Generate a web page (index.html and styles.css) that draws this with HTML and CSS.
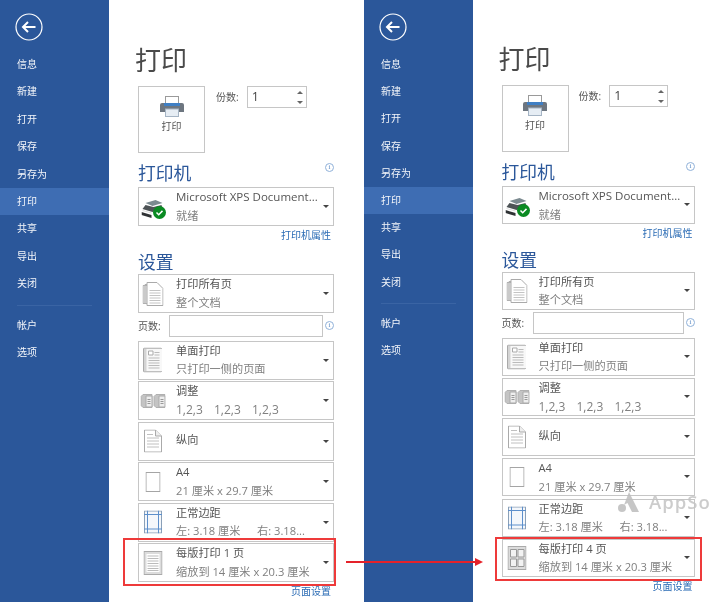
FILE: index.html
```html
<!DOCTYPE html>
<html lang="zh-CN">
<head>
    <meta charset="UTF-8">
    <title>打印</title>
    <link rel="stylesheet" href="styles.css">
</head>
<body>
    <!-- shared icons -->
    <svg class="defs" width="0" height="0">
        <symbol id="i-back" viewBox="0 0 28 28"><circle cx="14" cy="14" r="13" fill="none" stroke="#fff" stroke-width="1.2"/><path d="M20.5 14H8.500M13 9l-5 5 5 5" fill="none" stroke="#fff" stroke-width="2"/></symbol>
        <symbol id="i-printer" viewBox="0 0 24 21"><rect x="5.500" y="0.500" width="13" height="7" fill="#fff" stroke="#9a9a9a"/><path d="M2 7h20a2 2 0 0 1 2 2v7h-5v-3H5v3H0V9a2 2 0 0 1 2-2z" fill="#6d7680"/><rect x="4" y="7" width="16" height="3" fill="#3f7fc4"/><rect x="5.500" y="13" width="13" height="7.500" fill="#e6edf4" stroke="#a5b4c4"/></symbol>
        <symbol id="i-xps" viewBox="0 0 25 20"><path d="M4 3l10-3 7 3-10 3z" fill="#7b8a90"/><path d="M1 9l3-4 8 2 8-2 1 4-10 3z" fill="#4d5356"/><path d="M0 12l10 3v3L0 15z" fill="#2f3234"/><path d="M1 10.500l9 2.500" stroke="#ddd"/><circle cx="18" cy="12.500" r="6.500" fill="#0a8a22"/><path d="M15 12.500l2.200 2.200 3.800-3.800" fill="none" stroke="#fff" stroke-width="1.500"/></symbol>
        <symbol id="i-all" viewBox="0 0 21 25"><path d="M0.500 4h8v18h-8zM2.500 3h8v19h-8z" fill="#e4e4e4" stroke="#b0b0b0"/><path d="M4.500 1h10l6 6v17h-16z" fill="#fff" stroke="#aaa"/><path d="M7 9h11M7 11.500h11M7 14h11M7 16.500h11M7 19h11M7 21.500h11" stroke="#c4c4c4"/></symbol>
        <symbol id="i-single" viewBox="0 0 20 25"><rect x="0.500" y="0.500" width="18" height="24" rx="1" fill="#d4d4d4" stroke="#aaa"/><rect x="3.500" y="1.500" width="15.500" height="22" fill="#f8f8f8"/><path d="M5.500 3.500h4.500v4H5.500z" fill="#fff" stroke="#aaa"/><path d="M11.500 5h5M11.500 7.500h5M5.500 10.500h11M5.500 13h11M5.500 15.500h11M5.500 18h11M5.500 20.500h11" stroke="#bbb"/></symbol>
        <symbol id="i-collate" viewBox="0 0 25 15"><path d="M0.500 3l2-2h9v13h-9l-2-2z" fill="#c4c4c4" stroke="#b0b0b0"/><path d="M5.500 2.500h6v11h-6z" fill="#eee" stroke="#aaa"/><path d="M7 6h3M7 8h3M7 10h3" stroke="#999"/><path d="M13.500 3l2-2h9v13h-9l-2-2z" fill="#c4c4c4" stroke="#b0b0b0"/><path d="M18.500 2.500h6v11h-6z" fill="#eee" stroke="#aaa"/><path d="M20 6h3M20 8h3M20 10h3" stroke="#999"/></symbol>
        <symbol id="i-portrait" viewBox="0 0 18 23"><path d="M0.500 0.500h11l6 6v16h-17z" fill="#fff" stroke="#aaa"/><path d="M11.500 0.500v6h6" fill="#eee" stroke="#aaa"/><path d="M3 5h6M3 8.500h12M3 11.500h12M3 14.500h12M3 17.500h12" stroke="#c0c0c0"/></symbol>
        <symbol id="i-a4" viewBox="0 0 15 20"><rect x="0.500" y="0.500" width="14" height="19" fill="#fff" stroke="#a5a5a5"/></symbol>
        <symbol id="i-margins" viewBox="0 0 18 23"><rect x="0.500" y="0.500" width="17" height="22" fill="#f4f7fb" stroke="#8aa0b8"/><path d="M0 4h18M0 18.500h18M3.500 0v23M14.500 0v23" stroke="#5d8fcb"/></symbol>
        <symbol id="i-one" viewBox="0 0 19 24"><rect x="0.500" y="0.500" width="18" height="23" fill="#dcdcdc" stroke="#aaa"/><rect x="3" y="3" width="13" height="18" fill="#fff"/><path d="M4 5h11M4 7.500h11M4 10h11M4 12.500h11M4 15h11M4 17.500h11M4 19.500h11" stroke="#bbb"/></symbol>
        <symbol id="i-four" viewBox="0 0 19 24"><rect x="0.500" y="0.500" width="18" height="23" fill="#dcdcdc" stroke="#aaa"/><path d="M3 3.500h6v7.500H3zM10.500 3.500h6v7.500h-6zM3 13h6v7.500H3zM10.500 13h6v7.500h-6z" fill="#f2f2f2" stroke="#999"/></symbol>
    </svg>

    <div class="compare">
        <section class="window">
            <nav class="side">
                <svg class="back" width="28" height="28"><use href="#i-back"/></svg>
                <ul class="menu">
                    <li>信息</li><li>新建</li><li>打开</li><li>保存</li><li>另存为</li>
                    <li class="active">打印</li>
                    <li>共享</li><li>导出</li><li>关闭</li>
                    <li class="divider"></li>
                    <li>帐户</li><li>选项</li>
                </ul>
            </nav>
            <main class="backstage">
                <h1>打印</h1>
                <div class="print-row">
                    <button class="print-btn">
                        <svg width="24" height="21"><use href="#i-printer"/></svg>
                        <span>打印</span>
                    </button>
                    <label class="copies-label">份数:</label>
                    <div class="copies">1<span class="spin"><i class="up"></i><i class="down"></i></span></div>
                </div>
                <div class="head-row"><h2>打印机</h2><span class="info">i</span></div>
                <div class="drop">
                    <svg class="ico ico-xps" width="25" height="20"><use href="#i-xps"/></svg>
                    <div class="txt"><b class="printer-name">Microsoft XPS Document...</b><span>就绪</span></div>
                    <i class="caret"></i>
                </div>
                <a class="link printer-link">打印机属性</a>
                <h2 class="settings">设置</h2>
                <div class="drop">
                    <svg class="ico" width="21" height="25"><use href="#i-all"/></svg>
                    <div class="txt"><b>打印所有页</b><span>整个文档</span></div>
                    <i class="caret"></i>
                </div>
                <div class="pages-row">
                    <label>页数:</label>
                    <div class="pages-input"></div>
                    <span class="info">i</span>
                </div>
                <div class="drop">
                    <svg class="ico" width="20" height="25"><use href="#i-single"/></svg>
                    <div class="txt"><b>单面打印</b><span>只打印一侧的页面</span></div>
                    <i class="caret"></i>
                </div>
                <div class="drop">
                    <svg class="ico" width="25" height="15"><use href="#i-collate"/></svg>
                    <div class="txt"><b>调整</b><span class="nums"><em>1,2,3</em><em>1,2,3</em><em>1,2,3</em></span></div>
                    <i class="caret"></i>
                </div>
                <div class="drop">
                    <svg class="ico" width="18" height="23"><use href="#i-portrait"/></svg>
                    <div class="txt single"><b>纵向</b></div>
                    <i class="caret"></i>
                </div>
                <div class="drop">
                    <svg class="ico" width="15" height="20"><use href="#i-a4"/></svg>
                    <div class="txt"><b>A4</b><span>21 厘米 x 29.7 厘米</span></div>
                    <i class="caret"></i>
                </div>
                <div class="drop">
                    <svg class="ico" width="18" height="23"><use href="#i-margins"/></svg>
                    <div class="txt"><b>正常边距</b><span class="margins"><em>左: 3.18 厘米</em><em>右: 3.18...</em></span></div>
                    <i class="caret"></i>
                </div>
                <div class="drop">
                    <svg class="ico" width="19" height="24"><use href="#i-one"/></svg>
                    <div class="txt"><b>每版打印 1 页</b><span>缩放到 14 厘米 x 20.3 厘米</span></div>
                    <i class="caret"></i>
                </div>
                <a class="link page-link">页面设置</a>
            </main>
        </section>

        <section class="window second">
            <nav class="side">
                <svg class="back" width="28" height="28"><use href="#i-back"/></svg>
                <ul class="menu">
                    <li>信息</li><li>新建</li><li>打开</li><li>保存</li><li>另存为</li>
                    <li class="active">打印</li>
                    <li>共享</li><li>导出</li><li>关闭</li>
                    <li class="divider"></li>
                    <li>帐户</li><li>选项</li>
                </ul>
            </nav>
            <main class="backstage">
                <h1>打印</h1>
                <div class="print-row">
                    <button class="print-btn">
                        <svg width="24" height="21"><use href="#i-printer"/></svg>
                        <span>打印</span>
                    </button>
                    <label class="copies-label">份数:</label>
                    <div class="copies">1<span class="spin"><i class="up"></i><i class="down"></i></span></div>
                </div>
                <div class="head-row"><h2>打印机</h2><span class="info">i</span></div>
                <div class="drop">
                    <svg class="ico ico-xps" width="25" height="20"><use href="#i-xps"/></svg>
                    <div class="txt"><b class="printer-name">Microsoft XPS Document...</b><span>就绪</span></div>
                    <i class="caret"></i>
                </div>
                <a class="link printer-link">打印机属性</a>
                <h2 class="settings">设置</h2>
                <div class="drop">
                    <svg class="ico" width="21" height="25"><use href="#i-all"/></svg>
                    <div class="txt"><b>打印所有页</b><span>整个文档</span></div>
                    <i class="caret"></i>
                </div>
                <div class="pages-row">
                    <label>页数:</label>
                    <div class="pages-input"></div>
                    <span class="info">i</span>
                </div>
                <div class="drop">
                    <svg class="ico" width="20" height="25"><use href="#i-single"/></svg>
                    <div class="txt"><b>单面打印</b><span>只打印一侧的页面</span></div>
                    <i class="caret"></i>
                </div>
                <div class="drop">
                    <svg class="ico" width="25" height="15"><use href="#i-collate"/></svg>
                    <div class="txt"><b>调整</b><span class="nums"><em>1,2,3</em><em>1,2,3</em><em>1,2,3</em></span></div>
                    <i class="caret"></i>
                </div>
                <div class="drop">
                    <svg class="ico" width="18" height="23"><use href="#i-portrait"/></svg>
                    <div class="txt single"><b>纵向</b></div>
                    <i class="caret"></i>
                </div>
                <div class="drop">
                    <svg class="ico" width="15" height="20"><use href="#i-a4"/></svg>
                    <div class="txt"><b>A4</b><span>21 厘米 x 29.7 厘米</span></div>
                    <i class="caret"></i>
                </div>
                <div class="drop">
                    <svg class="ico" width="18" height="23"><use href="#i-margins"/></svg>
                    <div class="txt"><b>正常边距</b><span class="margins"><em>左: 3.18 厘米</em><em>右: 3.18...</em></span></div>
                    <i class="caret"></i>
                </div>
                <div class="drop">
                    <svg class="ico" width="19" height="24"><use href="#i-four"/></svg>
                    <div class="txt"><b>每版打印 4 页</b><span>缩放到 14 厘米 x 20.3 厘米</span></div>
                    <i class="caret"></i>
                </div>
                <a class="link page-link">页面设置</a>
            </main>
        </section>

        <!-- overlays on top of the two shots -->
        <div class="mark mark-left"></div>
        <div class="mark mark-right"></div>
        <div class="arrow"></div>
        <div class="watermark">
            <svg width="21" height="20" viewBox="0 0 21 20"><circle cx="4" cy="16" r="4" fill="#bdbdbd"/><path d="M11 0l10 20h-7l-4.500-9-3.500 2z" fill="#bdbdbd"/></svg>
            <span>AppSo</span>
        </div>
    </div>
</body>
</html>
```

FILE: styles.css
```css
* {
    box-sizing: border-box;
}
html, body {
    margin: 0;
    height: 100%;
}
body {
    overflow: hidden;
    background: #fff;
    font-family: "Open Sans", "Noto Sans CJK SC", sans-serif;
    color: #555;
}
.defs {
    position: absolute;
}
.compare {
    position: relative;
    display: flex;
    width: 720px;
    height: 602px;
    filter: blur(0.35px);
}
.window {
    display: flex;
    width: 364px;
    height: 602px;
    --row: 27.4px;
    --side: 109px;
    --main-w: 196px;
    --drop-h: 39px;
    --drop-gap: 1.5px;
    --title-top: 39px;
    --divider: 14px;
}
.window.second {
    width: 356px;
    --row: 27.2px;
    --side: 108.5px;
    --main-w: 193.5px;
    --drop-h: 38px;
    --drop-gap: 2.2px;
    --title-top: 38px;
    --divider: 14px;
}

/* left blue menu */
.side {
    width: var(--side);
    flex: none;
    background: #2b579a;
    padding-top: 13px;
}
.back {
    display: block;
    margin-left: 15px;
}
.menu {
    list-style-type: none;
    margin: 10px 0 0;
    padding: 0;
}
.menu li {
    height: var(--row);
    line-height: var(--row);
    padding-left: 17px;
    font-size: 10px;
    color: #f4f6fa;
}
.menu .active {
    background: #3e6db3;
}
.menu .divider {
    height: var(--divider);
    position: relative;
}
.menu .divider::after {
    content: "";
    position: absolute;
    left: 17px;
    right: 17px;
    top: 7px;
    border-top: 1px solid #3a64a4;
}

/* white part */
.backstage {
    flex: 1;
    padding: var(--title-top) 0 0 29px;
}
h1 {
    margin: 0 0 0 -3px;
    font-size: 26px;
    line-height: 42px;
    font-weight: 400;
    color: #4a4a4a;
}
.print-row {
    display: flex;
    align-items: flex-start;
    height: 67px;
    margin-top: 5px;
}
.print-btn {
    flex: none;
    width: 67px;
    height: 67px;
    padding: 9px 0 0;
    background: #fff;
    border: 1px solid #c6c6c6;
    font: inherit;
    font-size: 10px;
    line-height: 14px;
    color: #555;
    display: flex;
    flex-direction: column;
    align-items: center;
    gap: 2px;
}
.copies-label {
    margin: 4px 0 0 11px;
    font-size: 10px;
    line-height: 14px;
}
.copies {
    position: relative;
    width: 60px;
    height: 22px;
    margin-left: 8px;
    border: 1px solid #c6c6c6;
    padding-left: 4px;
    font-size: 12.5px;
    line-height: 19px;
    color: #444;
}
.second .copies-label {
    margin-left: 10px;
}
.second .copies {
    width: 59px;
}
.spin i {
    position: absolute;
    right: 3px;
    border-left: 3px solid transparent;
    border-right: 3px solid transparent;
}
.spin .up {
    top: 4px;
    border-bottom: 3px solid #666;
}
.spin .down {
    top: 14px;
    border-top: 3px solid #666;
}
.head-row {
    position: relative;
    width: var(--main-w);
    margin: 7px 0 1px;
}
h2 {
    margin: 0;
    font-size: 17.8px;
    line-height: 26px;
    font-weight: 400;
    color: #2b579a;
}
.info {
    display: block;
    flex: none;
    width: 9px;
    height: 9px;
    border: 1px solid #8fb0d8;
    border-radius: 50%;
    font: 7px/7px "Liberation Serif", serif;
    text-align: center;
    color: #5a8ac5;
}
.head-row .info {
    position: absolute;
    right: 0;
    top: 3px;
}
.drop {
    position: relative;
    width: var(--main-w);
    height: var(--drop-h);
    margin-bottom: var(--drop-gap);
    border: 1px solid #c6c6c6;
    background: #fff;
}
.ico {
    position: absolute;
    left: 14px;
    top: 50%;
    transform: translate(-50%, -50%);
}
.ico-xps {
    left: 15px;
    margin-top: 3px;
}
.txt {
    position: absolute;
    left: 37px;
    top: 0;
    font-size: 11.2px;
    line-height: 18.5px;
    white-space: nowrap;
}
.second .txt {
    left: 36px;
}
.txt b {
    display: block;
    font-weight: 400;
    color: #555;
}
.txt .printer-name {
    font-size: 11.5px;
}
.txt.single {
    top: 8px;
}
.txt span {
    display: block;
    color: #808080;
}
.txt em {
    display: inline-block;
    font-style: normal;
}
.txt .nums {
    font-size: 12px;
}
.nums em {
    width: 38px;
}
.margins em {
    width: 81px;
}
.caret {
    position: absolute;
    right: 4px;
    top: 17px;
    border-left: 3px solid transparent;
    border-right: 3px solid transparent;
    border-top: 3.5px solid #444;
}
.second .caret {
    top: 16px;
}
.link {
    display: block;
    width: 193px;
    text-align: right;
    font-size: 10px;
    line-height: 14px;
    color: #2b6cb5;
}
.second .link {
    width: 191px;
}
.printer-link {
    margin-top: 2px;
}
.settings {
    margin-top: 7px;
    margin-bottom: -1px;
}
.second .settings {
    margin-top: 6.5px;
}
.pages-row {
    display: flex;
    align-items: center;
    width: var(--main-w);
    height: 22px;
    margin: 1.5px 0 4px;
    font-size: 10px;
}
.pages-row label {
    flex: none;
    width: 31px;
    white-space: nowrap;
}
.pages-input {
    flex: 1;
    height: 22px;
    border: 1px solid #c6c6c6;
}
.pages-row .info {
    margin-left: 2px;
}

/* red marks over the shots */
.mark {
    position: absolute;
    border: 2px solid #ee3a3a;
}
.mark-left {
    left: 123px;
    top: 538px;
    width: 213px;
    height: 48px;
}
.mark-right {
    left: 495px;
    top: 537px;
    width: 207px;
    height: 44px;
}
.arrow {
    position: absolute;
    left: 346px;
    top: 561px;
    width: 130px;
    border-top: 2px solid #e5222a;
}
.arrow::after {
    content: "";
    position: absolute;
    right: -7px;
    top: -5px;
    border-left: 8px solid #e5222a;
    border-top: 4px solid transparent;
    border-bottom: 4px solid transparent;
}
.watermark {
    position: absolute;
    left: 618px;
    top: 489px;
    display: flex;
    align-items: center;
    gap: 10px;
    opacity: 0.85;
}
.watermark span {
    font-family: "Open Sans", sans-serif;
    font-size: 18.5px;
    font-weight: 600;
    letter-spacing: 1px;
    color: #c4c4c4;
}
```
